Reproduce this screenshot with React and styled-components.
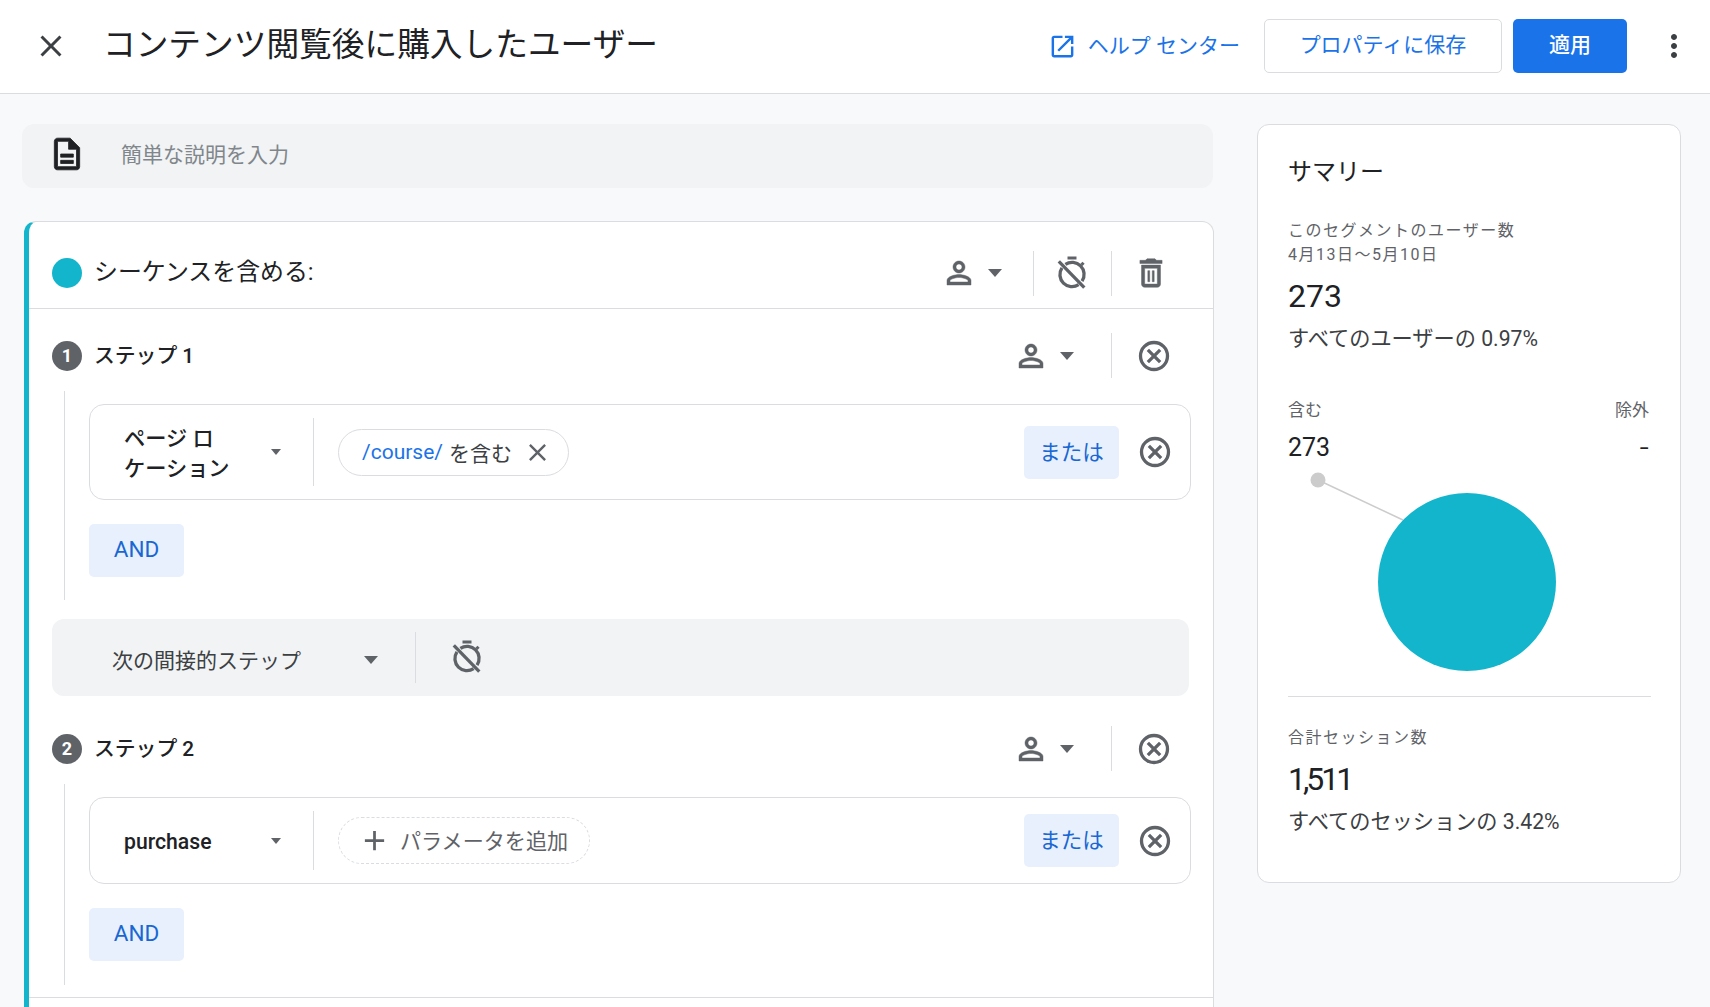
import React from 'react';
import styled, { createGlobalStyle } from 'styled-components';

const GlobalStyle = createGlobalStyle`
  html, body {
    margin: 0;
    padding: 0;
    background: #f8f9fa;
    font-family: Roboto, "Noto Sans CJK JP", sans-serif;
    color: #202124;
  }
  * { box-sizing: border-box; }
`;

const Page = styled.div`
  width: 1710px;
  height: 1007px;
  overflow: hidden;
  background: #f8f9fa;
`;

const Header = styled.header`
  height: 94px;
  display: flex;
  align-items: center;
  padding: 0 18px 1px 33px;
  background: #fff;
  border-bottom: 1px solid #dadce0;
`;
const Title = styled.h1`
  margin: -2px 0 0 34px;
  font-size: 32.7px;
  font-weight: 400;
  line-height: 40px;
  color: #202124;
`;
const HelpLink = styled.a`
  margin-left: auto;
  display: flex;
  align-items: center;
  gap: 11px;
  font-size: 21px;
  color: #1a73e8;
`;
const HelpText = styled.span`
  margin-top: -5px;
`;
const OutlineButton = styled.button`
  width: 238px;
  height: 54px;
  margin-left: 24px;
  padding: 0 0 6px;
  background: #fff;
  border: 1px solid #dadce0;
  border-radius: 5px;
  font: inherit;
  font-size: 21px;
  color: #1a73e8;
`;
const PrimaryButton = styled.button`
  width: 114px;
  height: 54px;
  margin-left: 11px;
  padding: 0 0 6px;
  background: #1a73e8;
  border: 0;
  border-radius: 5px;
  font: inherit;
  font-size: 21px;
  font-weight: 500;
  color: #fff;
`;

const Main = styled.main`
  display: flex;
  align-items: flex-start;
  padding: 30px 0 0 22px;
`;
const Editor = styled.div`
  width: 1191px;
  flex: none;
`;
const DescBar = styled.div`
  height: 64px;
  display: flex;
  align-items: center;
  padding-left: 26px;
  gap: 35px;
  background: #f1f3f4;
  border-radius: 12px;
  font-size: 21px;
  color: #80868b;
`;
const DescIcon = styled.span`
  display: flex;
  margin-top: -4px;
`;
const DescText = styled.span`
  margin-top: -6px;
`;
const Card = styled.section`
  margin: 33px -1px 0 2px;
  background: #fff;
  border: 1px solid #dadce0;
  border-left: 5px solid #12b5cb;
  border-radius: 12px 12px 0 0;
`;
const CardHead = styled.div`
  height: 87px;
  display: flex;
  align-items: center;
  padding: 16px 43px 0 23px;
  border-bottom: 1px solid #dadce0;
`;
const TealDot = styled.span`
  width: 30px;
  height: 30px;
  flex: none;
  border-radius: 50%;
  background: #12b5cb;
`;
const HeadLabel = styled.span`
  margin: -7px 0 0 12px;
  font-size: 23.9px;
  font-weight: 400;
  color: #202124;
`;
const Spacer = styled.span`
  flex: 1;
`;
const VRule = styled.span`
  width: 1px;
  height: ${({ $h }) => $h}px;
  flex: none;
  margin: 0 ${({ $r }) => $r}px 0 ${({ $l }) => $l}px;
  background: #dadce0;
`;
const StepRow = styled.div`
  height: 45px;
  margin-top: ${({ $top }) => $top}px;
  display: flex;
  align-items: center;
  padding: 0 41px 0 23px;
`;
const StepNum = styled.span`
  width: 30px;
  height: 30px;
  flex: none;
  display: flex;
  align-items: center;
  justify-content: center;
  border-radius: 50%;
  background: #5f6368;
  color: #fff;
  font-size: 18px;
  font-weight: 700;
`;
const StepLabel = styled.span`
  margin: -4px 0 0 12px;
  font-size: 20.8px;
  font-weight: 500;
  color: #202124;
`;
const StepBody = styled.div`
  margin: 13px 22px 0 35px;
  padding: 13px 0 ${({ $bottom }) => $bottom}px 24px;
  border-left: 1px solid #dadce0;
`;
const ConditionBox = styled.div`
  height: ${({ $h }) => $h}px;
  display: flex;
  align-items: center;
  padding: 0 17px 0 34px;
  background: #fff;
  border: 1px solid #dadce0;
  border-radius: 15px;
`;
const SelectLabel = styled.span`
  width: 147px;
  flex: none;
  margin-top: 3px;
  font-size: 21.2px;
  font-weight: 500;
  line-height: 30px;
  color: #202124;
`;
const Caret = styled.span`
  width: 0;
  height: 0;
  flex: none;
  margin-top: ${({ $drop }) => $drop || 0}px;
  border-style: solid;
  border-color: #5f6368 transparent transparent;
  border-width: ${({ $big }) => ($big ? '8px 7.5px 0' : '6px 5.5px 0')};
`;
const BoxRule = styled.span`
  width: 1px;
  flex: none;
  align-self: stretch;
  margin: 13px 24px 13px 32px;
  background: #dadce0;
`;
const Chip = styled.div`
  height: 47px;
  display: flex;
  align-items: center;
  padding: 0 16px 0 23px;
  border: 1px solid #dadce0;
  border-radius: 24px;
  font-size: 21px;
  color: #3c4043;
`;
const ChipValue = styled.span`
  margin-right: 6px;
  color: #1a73e8;
`;
const AddChip = styled.div`
  height: 47px;
  display: flex;
  align-items: center;
  gap: 9px;
  padding: 0 21px 0 19px;
  border: 1px dashed #dadce0;
  border-radius: 24px;
  font-size: 21.1px;
  color: #5f6368;
`;
const AddText = styled.span`
  margin-top: -2px;
`;
const TonalButton = styled.button`
  width: 95px;
  height: 53px;
  flex: none;
  margin-left: ${({ $auto }) => ($auto ? 'auto' : '0')};
  padding: 0 0 ${({ $and }) => ($and ? 3 : 4)}px;
  background: #e8f0fe;
  border: 0;
  border-radius: 5px;
  font: inherit;
  font-size: ${({ $and }) => ($and ? 22.5 : 21.5)}px;
  font-weight: 400;
  color: #1967d2;
`;
const AndRow = styled.div`
  margin-top: ${({ $top }) => $top}px;
`;
const NextBar = styled.div`
  height: 77px;
  margin: 19px 24px 0 23px;
  display: flex;
  align-items: center;
  padding-left: 60px;
  background: #f1f3f4;
  border-radius: 12px;
  font-size: 21px;
  color: #3c4043;
`;
const NextLabel = styled.span`
  width: 252px;
  flex: none;
  margin-top: 2px;
`;
const NextTimer = styled.span`
  display: flex;
  margin-top: -2px;
`;
const BottomRule = styled.div`
  height: 40px;
  margin-top: 12px;
  border-top: 1px solid #dadce0;
`;

const Summary = styled.aside`
  width: 424px;
  flex: none;
  margin-left: 44px;
  padding: 31px 29px 46px 30px;
  background: #fff;
  border: 1px solid #dadce0;
  border-radius: 12px;
`;
const SummaryTitle = styled.h2`
  margin: 0;
  font-size: 24px;
  font-weight: 400;
  line-height: 32px;
  color: #202124;
`;
const Caption = styled.div`
  margin-top: ${({ $top }) => $top}px;
  font-size: 16px;
  letter-spacing: 1.5px;
  line-height: 24px;
  color: #5f6368;
`;
const BigNumber = styled.div`
  margin-top: 9px;
  font-size: 32px;
  line-height: 40px;
  letter-spacing: ${({ $tight }) => ($tight ? '-3px' : '0')};
  color: #202124;
`;
const Share = styled.div`
  margin-top: 9px;
  font-size: 21.2px;
  line-height: 28px;
  color: #3c4043;
`;
const SplitRow = styled.div`
  display: flex;
  justify-content: space-between;
  padding-right: 2px;
  margin-top: ${({ $top }) => $top}px;
  font-size: ${({ $size }) => $size}px;
  line-height: ${({ $line }) => $line}px;
  color: ${({ $color }) => $color};
`;
const Dash = styled.span`
  font-size: 33px;
  font-weight: 300;
`;
const Chart = styled.svg`
  display: block;
  width: 331px;
  height: 233px;
  margin: -1px 0 0 1px;
`;
const SummaryRule = styled.div`
  border-top: 1px solid #dadce0;
`;

const Icon = styled.svg`
  width: ${({ $size }) => $size}px;
  height: ${({ $size }) => $size}px;
  flex: none;
  margin-left: ${({ $ml }) => $ml || 0}px;
  fill: ${({ $color }) => $color || '#5f6368'};
  stroke: ${({ $bold, $color }) => ($bold ? $color || '#5f6368' : 'none')};
  stroke-width: ${({ $bold }) => $bold || 0};
`;

const CLOSE = 'M19 6.41L17.59 5 12 10.59 6.41 5 5 6.41 10.59 12 5 17.59 6.41 19 12 13.41 17.59 19 19 17.59 13.41 12z';
const OPEN = 'M19 19H5V5h7V3H5c-1.11 0-2 .9-2 2v14c0 1.1.89 2 2 2h14c1.1 0 2-.9 2-2v-7h-2v7zM14 3v2h3.59l-9.83 9.83 1.41 1.41L19 6.41V10h2V3h-7z';
const MORE = 'M12 8c1.1 0 2-.9 2-2s-.9-2-2-2-2 .9-2 2 .9 2 2 2zm0 2c-1.1 0-2 .9-2 2s.9 2 2 2 2-.9 2-2-.9-2-2-2zm0 6c-1.1 0-2 .9-2 2s.9 2 2 2 2-.9 2-2-.9-2-2-2z';
const DOC = 'M8 16h8v2H8zm0-4h8v2H8zm6-10H6c-1.1 0-2 .9-2 2v16c0 1.1.89 2 2 2h12c1.1 0 2-.9 2-2V8l-6-6zm4 18H6V4h7v5h5v11z';
const PERSON = 'M12 6c1.1 0 2 .9 2 2s-.9 2-2 2-2-.9-2-2 .9-2 2-2m0 9c2.7 0 5.8 1.29 6 2v1H6v-.99c.2-.72 3.3-2.01 6-2.01M12 4C9.79 4 8 5.79 8 8s1.79 4 4 4 4-1.79 4-4-1.79-4-4-4zm0 9c-2.67 0-8 1.34-8 4v3h16v-3c0-2.66-5.33-4-8-4z';
const TRASH = 'M16 9v10H8V9h8m-1.5-6h-5l-1 1H5v2h14V4h-3.5l-1-1zM18 7H6v12c0 1.1.9 2 2 2h8c1.1 0 2-.9 2-2V7zM10 10.5h1.2v7H10zm2.8 0H14v7h-1.2z';
const PLUS = 'M19 13h-6v6h-2v-6H5v-2h6V5h2v6h6v2z';

const Glyph = ({ d, size = 36, color, ml, bold }) => (
  <Icon viewBox="0 0 24 24" $size={size} $color={color} $ml={ml} $bold={bold}>
    <path d={d} />
  </Icon>
);

const CircleX = ({ ml }) => (
  <Icon viewBox="0 0 24 24" $size={36} $ml={ml}>
    <circle cx="12" cy="12" r="9" fill="none" stroke="#5f6368" strokeWidth="2.2" />
    <path d="M7.9 7.9l8.2 8.2M16.1 7.9l-8.2 8.2" fill="none" stroke="#5f6368" strokeWidth="2.2" />
  </Icon>
);

const TimerOff = () => (
  <Icon viewBox="0 0 24 24" $size={36}>
    <path d="M9 1h6v2H9z" />
    <path d="M7.6 6.3A8 8 0 0 1 18.7 17.4M5.3 8.6A8 8 0 0 0 16.4 19.7" fill="none" stroke="#5f6368" strokeWidth="2.2" />
    <path d="M17.6 5.9l1.4-1.4 1.4 1.4L19 7.3z" />
    <path d="M3.2 4.2l17 17.6" fill="none" stroke="#5f6368" strokeWidth="2.2" />
  </Icon>
);

const CaretSlot = styled.span`
  width: 36px;
  flex: none;
  display: flex;
  justify-content: center;
`;

const PersonPicker = () => (
  <>
    <Glyph d={PERSON} bold={0.3} />
    <CaretSlot><Caret $big /></CaretSlot>
  </>
);

const Step = ({ n, top }) => (
  <StepRow $top={top}>
    <StepNum>{n}</StepNum>
    <StepLabel>ステップ {n}</StepLabel>
    <Spacer />
    <PersonPicker />
    <VRule $h={45} $l={26} $r={24} />
    <CircleX />
  </StepRow>
);

const App = () => (
  <Page>
    <GlobalStyle />
    <Header>
      <Glyph d={CLOSE} color="#3c4043" />
      <Title>コンテンツ閲覧後に購入したユーザー</Title>
      <HelpLink>
        <Glyph d={OPEN} size={29} color="#1a73e8" />
        <HelpText>ヘルプ センター</HelpText>
      </HelpLink>
      <OutlineButton>プロパティに保存</OutlineButton>
      <PrimaryButton>適用</PrimaryButton>
      <Glyph d={MORE} color="#3c4043" ml={29} />
    </Header>

    <Main>
      <Editor>
        <DescBar>
          <DescIcon><Glyph d={DOC} size={38} color="#202124" bold={0.5} /></DescIcon>
          <DescText>簡単な説明を入力</DescText>
        </DescBar>

        <Card>
          <CardHead>
            <TealDot />
            <HeadLabel>シーケンスを含める:</HeadLabel>
            <Spacer />
            <PersonPicker />
            <VRule $h={45} $l={20} $r={20} />
            <TimerOff />
            <VRule $h={45} $l={21} $r={20} />
            <Glyph d={TRASH} size={38} bold={0.3} />
          </CardHead>

          <Step n={1} top={24} />
          <StepBody $bottom={23}>
            <ConditionBox $h={96}>
              <SelectLabel>ページ ロ<br />ケーション</SelectLabel>
              <Caret />
              <BoxRule />
              <Chip>
                <ChipValue>/course/</ChipValue>
                を含む
                <Glyph d={CLOSE} size={29} ml={11} />
              </Chip>
              <TonalButton $auto>または</TonalButton>
              <CircleX ml={18} />
            </ConditionBox>
            <AndRow $top={24}><TonalButton $and>AND</TonalButton></AndRow>
          </StepBody>

          <NextBar>
            <NextLabel>次の間接的ステップ</NextLabel>
            <Caret $big $drop={5} />
            <VRule $h={51} $l={37} $r={33} />
            <NextTimer><TimerOff /></NextTimer>
          </NextBar>

          <Step n={2} top={30} />
          <StepBody $bottom={24}>
            <ConditionBox $h={87}>
              <SelectLabel>purchase</SelectLabel>
              <Caret />
              <BoxRule />
              <AddChip>
                <Glyph d={PLUS} size={33} />
                <AddText>パラメータを追加</AddText>
              </AddChip>
              <TonalButton $auto>または</TonalButton>
              <CircleX ml={18} />
            </ConditionBox>
            <AndRow $top={24}><TonalButton $and>AND</TonalButton></AndRow>
          </StepBody>
          <BottomRule />
        </Card>
      </Editor>

      <Summary>
        <SummaryTitle>サマリー</SummaryTitle>
        <Caption $top={31}>このセグメントのユーザー数<br />4月13日〜5月10日</Caption>
        <BigNumber>273</BigNumber>
        <Share>すべてのユーザーの 0.97%</Share>
        <SplitRow $top={45} $size={17} $line={24} $color="#5f6368">
          <span>含む</span>
          <span>除外</span>
        </SplitRow>
        <SplitRow $top={10} $size={25} $line={32} $color="#202124">
          <span>273</span>
          <Dash>-</Dash>
        </SplitRow>
        <Chart viewBox="0 0 331 233">
          <line x1="29" y1="17" x2="114" y2="57" stroke="#ccc" strokeWidth="1.5" />
          <circle cx="29" cy="17" r="7.5" fill="#ccc" />
          <circle cx="178" cy="119" r="89" fill="#12b5cb" />
        </Chart>
        <SummaryRule />
        <Caption $top={29}>合計セッション数</Caption>
        <BigNumber $tight>1,511</BigNumber>
        <Share>すべてのセッションの 3.42%</Share>
      </Summary>
    </Main>
  </Page>
);

export default App;
